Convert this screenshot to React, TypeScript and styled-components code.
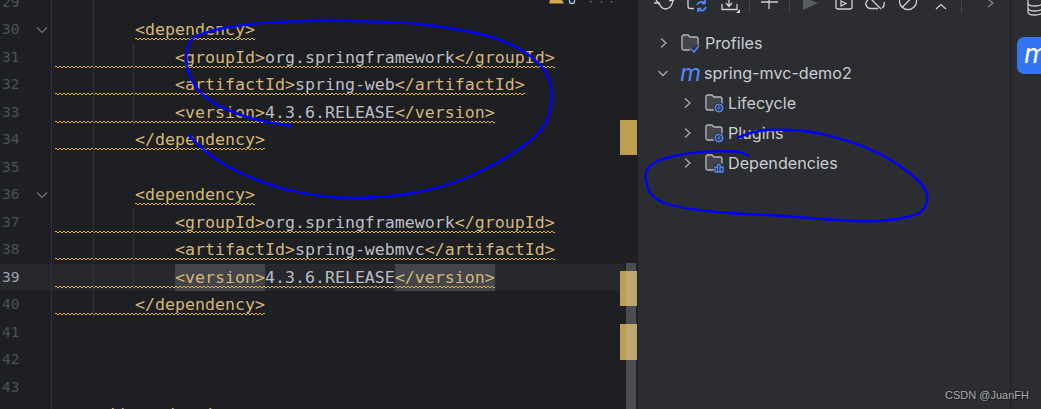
import React from "react";
import styled, { createGlobalStyle, css } from "styled-components";

const Global = createGlobalStyle`
  html, body { margin: 0; padding: 0; background: #2b2d30; }
  #root { width: 1041px; height: 409px; overflow: hidden; }
`;

const Shell = styled.div`
  position: relative;
  display: flex;
  width: 1041px;
  height: 409px;
  overflow: hidden;
  background: #2b2d30;
`;

const Editor = styled.section`
  position: relative;
  flex: 0 0 638px;
  height: 409px;
  overflow: hidden;
  background: #1e1f22;
`;

const Lines = styled.div`
  margin-top: -11.25px;
`;

const Row = styled.div<{ $current?: boolean }>`
  display: flex;
  height: 27.5px;
  background: ${(p) => (p.$current ? "#26282e" : "transparent")};
  margin-right: 13px;
`;

const Gutter = styled.div`
  flex: 0 0 52px;
  display: flex;
  align-items: center;
  justify-content: space-between;
  padding-left: 2px;
  padding-right: 2px;
  box-sizing: border-box;
  border-right: 1px solid #313438;
  margin-right: 3px;
`;

const LineNo = styled.span<{ $current?: boolean }>`
  font: 14.5px/27.5px "DejaVu Sans Mono", monospace;
  color: ${(p) => (p.$current ? "#a1a3ab" : "#4b5059")};
`;

const Fold = styled.svg`
  width: 12px;
  height: 8px;
  margin-right: 1px;
  fill: none;
  stroke: #6f737a;
  stroke-width: 1.2;
`;

const Code = styled.pre`
  margin: 0;
  font: 16.6px/27.5px "DejaVu Sans Mono", monospace;
  letter-spacing: 0.005px;
  color: #bcbec4;
  white-space: pre;
`;

const zigzag = (lift: string) => css`
  background-image:
    linear-gradient(90deg, #dcb33f 62%, transparent 62%),
    linear-gradient(90deg, transparent 38%, #dcb33f 38%);
  background-size: 4px 1px, 4px 1px;
  background-repeat: repeat-x;
  background-position: 0 calc(100% - ${lift} - 1px), 0 calc(100% - ${lift});
`;

const Wave = styled.span`
  padding-bottom: 1px;
  ${zigzag("0px")}
`;

const Tag = styled.span`
  color: #d5b778;
`;

const TagMark = styled(Tag)`
  background-color: #43454a;
  padding: 4px 0 4.5px;
  ${zigzag("3.5px")}
`;

const Guide = styled.i<{ $x: number; $top: number; $h: number }>`
  position: absolute;
  left: ${(p) => p.$x}px;
  top: ${(p) => p.$top}px;
  width: 1px;
  height: ${(p) => p.$h}px;
  background: #313438;
`;

const Thumb = styled.i`
  position: absolute;
  left: 626px;
  top: 263px;
  width: 10px;
  bottom: 0;
  background: #4c4d4f;
`;

const Marker = styled.i<{ $top: number; $h: number }>`
  position: absolute;
  left: 620px;
  top: ${(p) => p.$top}px;
  width: 17px;
  height: ${(p) => p.$h}px;
  background: #bd9f4f;
`;

const MarkerVeil = styled.i<{ $top: number; $h: number }>`
  position: absolute;
  left: 626px;
  top: ${(p) => p.$top}px;
  width: 11px;
  height: ${(p) => p.$h}px;
  background: #bda96f;
`;

const Inspect = styled.svg`
  position: absolute;
  left: 545px;
  top: 0;
  width: 75px;
  height: 6px;
`;

const Panel = styled.section`
  flex: 0 0 372px;
  height: 409px;
  display: flex;
  flex-direction: column;
  background: #2b2d30;
`;

const Toolbar = styled.div`
  flex: 0 0 14px;
  height: 14px;
  overflow: hidden;
  display: flex;
  padding-left: 16px;
`;

const ToolIcon = styled.svg<{ $w: number; $gap: number }>`
  flex: 0 0 ${(p) => p.$w}px;
  width: ${(p) => p.$w}px;
  height: 14px;
  margin-left: ${(p) => p.$gap}px;
  fill: none;
  stroke: #ced0d6;
  stroke-width: 1.3;
`;

const Sep = styled.i<{ $gap: number }>`
  flex: 0 0 1px;
  height: 14px;
  margin-left: ${(p) => p.$gap}px;
  background: #43454a;
`;

const Tree = styled.div`
  margin-top: 14px;
  display: flex;
  flex-direction: column;
`;

const TreeRow = styled.div<{ $level: number }>`
  display: flex;
  align-items: center;
  height: 30px;
  padding-left: ${(p) => 18 + p.$level * 24}px;
`;

const Chevron = styled.svg`
  flex: 0 0 14px;
  width: 14px;
  height: 14px;
  margin-right: 11px;
  fill: none;
  stroke: #a8abb2;
  stroke-width: 1.3;
`;

const NodeIcon = styled.svg<{ $level?: number }>`
  flex: 0 0 18px;
  width: 18px;
  height: 18px;
  margin-right: ${(p) => (p.$level ? 5 : 6)}px;
  overflow: visible;
`;

const MavenMark = styled.span`
  flex: 0 0 24px;
  margin-left: -1px;
  font: italic 400 24px/28px "Inter", sans-serif;
  color: #548af7;
`;

const Label = styled.span`
  font: 400 16.15px/30px "Inter", sans-serif;
  color: #c9ccd2;
  white-space: nowrap;
`;

const Stripe = styled.aside`
  flex: 0 0 31px;
  height: 409px;
  box-sizing: border-box;
  border-left: 1px solid #1e1f22;
  padding-left: 6px;
  display: flex;
  flex-direction: column;
  overflow: hidden;
`;

const DbIcon = styled.svg`
  width: 16px;
  height: 16px;
  margin-left: 10px;
  flex: 0 0 16px;
  fill: none;
  stroke: #ced0d6;
  stroke-width: 1.3;
`;

const MavenTab = styled.div`
  margin-top: 21px;
  width: 36px;
  height: 37px;
  flex: 0 0 37px;
  background: #3574f0;
  border-radius: 7px;
  color: #fff;
  font: italic 400 27px/33px "Inter", sans-serif;
  padding-left: 7px;
  box-sizing: border-box;
`;

const Ink = styled.svg`
  position: absolute;
  left: 0;
  top: 0;
  width: 1041px;
  height: 409px;
  pointer-events: none;
  fill: none;
  stroke: #0000ff;
  stroke-width: 2.4;
  stroke-linecap: round;
  stroke-linejoin: round;
`;

const Watermark = styled.span`
  position: absolute;
  left: 945px;
  bottom: 6px;
  font: 400 11px/16px "Liberation Sans", sans-serif;
  color: #a9aaac;
  text-shadow: 1px 1px 1px #17181a;
  white-space: nowrap;
`;

type Pt = [number, number];

const smooth = (pts: Pt[]): string => {
  let d = `M${pts[0][0]} ${pts[0][1]}`;
  for (let i = 1; i < pts.length - 1; i++) {
    const mx = (pts[i][0] + pts[i + 1][0]) / 2;
    const my = (pts[i][1] + pts[i + 1][1]) / 2;
    d += ` Q${pts[i][0]} ${pts[i][1]} ${mx.toFixed(1)} ${my.toFixed(1)}`;
  }
  const last = pts[pts.length - 1];
  return `${d} L${last[0]} ${last[1]}`;
};

const strokeA: Pt[] = [
  [290.7, 125.7], [263, 121.7], [236.7, 114], [210, 101.7], [193.3, 85], [186, 66.7], [186.7, 46.7],
  [193.3, 36.7], [213.3, 30], [246.7, 24], [296.7, 20.7], [356.7, 21], [410, 22.7], [453.3, 28.3],
  [493.3, 36.7], [523.3, 50], [543.3, 66.7], [552.7, 86.7], [550, 116.7], [536.7, 136.7], [503.3, 160],
  [463.3, 180], [423.3, 191.7], [383.3, 197.3], [343.3, 198.3], [303.3, 194], [263.3, 183.3],
  [226.7, 166.7], [203.3, 150], [189.3, 135.7],
];

const strokeB: Pt[] = [
  [738.3, 137.7], [753.3, 130.7], [783.3, 129.3], [813.3, 131.7], [846.7, 140], [880, 153.3],
  [906.7, 170], [923.3, 185], [928.3, 196.7], [925, 208.3], [916.7, 215], [893.3, 220], [866.7, 221.7],
  [826.7, 219.3], [773.3, 215], [723.3, 213.3], [673.3, 206.7], [653.3, 198.3], [646.7, 186.7],
  [645, 173.3], [650, 165], [663.3, 158.3], [690, 152.7], [716.7, 151], [740, 151.3], [748.3, 155.7],
];

type Line = {
  n: number;
  indent?: number;
  open?: string;
  value?: string;
  close?: string;
  fullWave?: boolean;
  fold?: boolean;
  current?: boolean;
};

const lines: Line[] = [
  { n: 29 },
  { n: 30, indent: 8, open: "<dependency>", fold: true },
  { n: 31, indent: 12, open: "<groupId>", value: "org.springframework", close: "</groupId>", fullWave: true },
  { n: 32, indent: 12, open: "<artifactId>", value: "spring-web", close: "</artifactId>", fullWave: true },
  { n: 33, indent: 12, open: "<version>", value: "4.3.6.RELEASE", close: "</version>", fullWave: true },
  { n: 34, indent: 8, open: "</dependency>", fullWave: true },
  { n: 35 },
  { n: 36, indent: 8, open: "<dependency>", fold: true },
  { n: 37, indent: 12, open: "<groupId>", value: "org.springframework", close: "</groupId>", fullWave: true },
  { n: 38, indent: 12, open: "<artifactId>", value: "spring-webmvc", close: "</artifactId>", fullWave: true },
  { n: 39, indent: 12, open: "<version>", value: "4.3.6.RELEASE", close: "</version>", fullWave: true, current: true },
  { n: 40, indent: 8, open: "</dependency>", fullWave: true },
  { n: 41 },
  { n: 42 },
  { n: 43 },
  { n: 44, indent: 4, open: "</dependencies>", fullWave: true },
];

const CodeLine = ({ line }: { line: Line }) => {
  const pad = " ".repeat(line.indent ?? 0);
  if (!line.open) return <Code> </Code>;
  const Open = line.current ? TagMark : Tag;
  const body = (
    <>
      <Open>{line.open}</Open>
      {line.value}
      {line.close && <Open>{line.close}</Open>}
    </>
  );
  return line.fullWave ? (
    <Code>
      <Wave>
        {pad}
        {body}
      </Wave>
    </Code>
  ) : (
    <Code>
      {pad}
      <Wave>{body}</Wave>
    </Code>
  );
};

const ChevronRight = () => (
  <Chevron viewBox="0 0 14 14">
    <path d="M5 2.5 L10 7 L5 11.5" />
  </Chevron>
);

const ChevronDown = () => (
  <Chevron viewBox="0 0 14 14">
    <path d="M2.5 5 L7 9.5 L11.5 5" />
  </Chevron>
);

const FolderShape = ({ cut }: { cut?: boolean }) => (
  <>
    <path
      d="M1 3 Q1 1 3 1 H7 L9 3 H15 Q17 3 17 5 V14 Q17 16 15 16 H3 Q1 16 1 14 Z"
      fill="#43454a"
      stroke="#b4b8bf"
      strokeWidth="1.3"
    />
    {cut && <circle cx="14" cy="14" r="5.6" fill="#2b2d30" />}
  </>
);

const ProfilesIcon = () => (
  <NodeIcon viewBox="0 0 18 18">
    <FolderShape />
    <path d="M10 15 L13 18 L18 11.5" fill="none" stroke="#2b2d30" strokeWidth="4" />
    <path d="M10 15 L13 18 L18 11.5" fill="none" stroke="#548af7" strokeWidth="1.5" />
  </NodeIcon>
);

const GearIcon = () => (
  <NodeIcon $level={1} viewBox="0 0 18 18">
    <FolderShape cut />
    <circle cx="14" cy="14" r="3.6" fill="none" stroke="#548af7" strokeWidth="1.5" strokeDasharray="2 .5" />
    <circle cx="14" cy="14" r="3.9" fill="none" stroke="#548af7" strokeWidth="1" />
    <circle cx="14" cy="14" r="1.2" fill="none" stroke="#548af7" strokeWidth="1" />
  </NodeIcon>
);

const DepsIcon = () => (
  <NodeIcon $level={1} viewBox="0 0 18 18">
    <FolderShape cut />
    <path d="M10 18 V13 H12.5 V18 M12.5 18 V10.5 H15 V18 M15 18 V13 H18 V18 H10 Z" fill="none" stroke="#548af7" strokeWidth="1.3" />
  </NodeIcon>
);

export default function App() {
  return (
    <Shell>
      <Global />
      <Editor>
        <Lines>
          {lines.map((line) => (
            <Row key={line.n} $current={line.current}>
              <Gutter>
                <LineNo $current={line.current}>{line.n}</LineNo>
                {line.fold && (
                  <Fold viewBox="0 0 12 8">
                    <path d="M1 1.5 L6 6.5 L11 1.5" />
                  </Fold>
                )}
              </Gutter>
              <CodeLine line={line} />
            </Row>
          ))}
        </Lines>
        <Guide $x={93} $top={0} $h={318} />
        <Guide $x={133} $top={43} $h={82} />
        <Guide $x={133} $top={208} $h={82} />
        <Thumb />
        <Marker $top={120} $h={35} />
        <Marker $top={271} $h={35} />
        <Marker $top={324} $h={36} />
        <MarkerVeil $top={271} $h={35} />
        <MarkerVeil $top={324} $h={36} />
        <Inspect viewBox="0 0 75 6">
          <path d="M5 0 H17 L19 3.5 H4 Z" fill="#d5a94a" />
          <path d="M24.5 0 V1.5 Q24.5 3.5 27 3.5 Q29.5 3.5 29.5 1.5 V0" fill="none" stroke="#a9c4e8" strokeWidth="1.3" />
          <path d="M45 1 L46.5 2.5 M56 2.5 L57 1 M66 1 L67 2.5" stroke="#6f737a" strokeWidth="1.2" />
        </Inspect>
      </Editor>
      <Panel>
        <Toolbar>
          <ToolIcon $w={20} $gap={0} viewBox="0 0 20 14">
            <path d="M2 0 L5 4 M0 3 H6 M5 3 Q7 9 12 9 Q18 8 19 0 M15 0.5 H20" />
          </ToolIcon>
          <ToolIcon $w={20} $gap={13} viewBox="0 0 20 14">
            <path d="M1 0 V6 Q1 8.5 3 8.5 H7" />
            <path d="M10 5 A5 5 0 0 1 18 3 M19 7 A5 5 0 0 1 11 9.5 M18 0 V3.5 H14.5 M11 12 V8.5 H14.5" stroke="#548af7" strokeWidth="1.6" />
          </ToolIcon>
          <ToolIcon $w={20} $gap={14} viewBox="0 0 20 14">
            <path d="M8 0 V6 M5 3 L8 6.5 L11 3 M1 4 V9.5 H16 V4" />
            <path d="M15 13 L19 13 L19 9 Z" fill="#ced0d6" stroke="none" />
          </ToolIcon>
          <Sep $gap={8} />
          <ToolIcon $w={20} $gap={10} viewBox="0 0 20 14">
            <path d="M9 0 V9 M1 2 H18" />
          </ToolIcon>
          <Sep $gap={9} />
          <ToolIcon $w={18} $gap={13} viewBox="0 0 18 14">
            <path d="M0 -3 L15 3 L0 10 Z" fill="#5a5d63" stroke="none" />
          </ToolIcon>
          <ToolIcon $w={18} $gap={14} viewBox="0 0 18 14">
            <path d="M1 0 V7 Q1 9 3 9 H15 Q17 9 17 7 V0" />
            <path d="M6 1 L11 3.5 L6 6 Z" />
          </ToolIcon>
          <ToolIcon $w={20} $gap={12} viewBox="0 0 20 14">
            <path d="M3 0 Q0 2 1 5 Q2 8 5 8.5 H13 M17 8 Q20 6 19 2 M5 -2 L16 9" />
          </ToolIcon>
          <ToolIcon $w={20} $gap={14} viewBox="0 0 20 14">
            <circle cx="9" cy="1" r="8.6" />
            <path d="M3.5 7 L14.5 -4" />
          </ToolIcon>
          <ToolIcon $w={16} $gap={14} viewBox="0 0 16 14">
            <path d="M3 9 L8 4.5 L13 9" />
          </ToolIcon>
          <Sep $gap={12} />
          <ToolIcon $w={14} $gap={25} viewBox="0 0 14 14">
            <path d="M1 -1 L6 3 L1 7" strokeWidth="1.1" stroke="#8b8e95" />
          </ToolIcon>
        </Toolbar>
        <Tree>
          <TreeRow $level={0}>
            <ChevronRight />
            <ProfilesIcon />
            <Label>Profiles</Label>
          </TreeRow>
          <TreeRow $level={0}>
            <ChevronDown />
            <MavenMark>m</MavenMark>
            <Label>spring-mvc-demo2</Label>
          </TreeRow>
          <TreeRow $level={1}>
            <ChevronRight />
            <GearIcon />
            <Label>Lifecycle</Label>
          </TreeRow>
          <TreeRow $level={1}>
            <ChevronRight />
            <GearIcon />
            <Label>Plugins</Label>
          </TreeRow>
          <TreeRow $level={1}>
            <ChevronRight />
            <DepsIcon />
            <Label>Dependencies</Label>
          </TreeRow>
        </Tree>
      </Panel>
      <Stripe>
        <DbIcon viewBox="0 0 16 16">
          <path d="M1 0 V12 Q1 15 8 15 Q15 15 15 12 V0 M1 3 Q1 6 8 6 Q15 6 15 3 M1 8 Q1 11 8 11 Q15 11 15 8" />
        </DbIcon>
        <MavenTab>m</MavenTab>
      </Stripe>
      <Ink viewBox="0 0 1041 409">
        <path d={smooth(strokeA)} />
        <path d={smooth(strokeB)} />
      </Ink>
      <Watermark>CSDN @JuanFH</Watermark>
    </Shell>
  );
}
